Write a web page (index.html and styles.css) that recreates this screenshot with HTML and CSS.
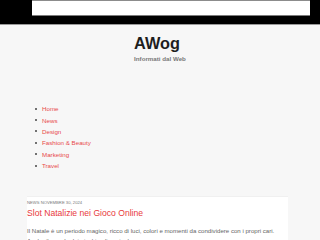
FILE: index.html
```html
<!DOCTYPE html>
<html lang="it">
<head>
<meta charset="utf-8">
<title>AWog</title>
<link rel="stylesheet" href="styles.css">
</head>
<body>
<header class="topbar">
  <div class="search"></div>
</header>
<div class="brand-wrap">
  <div class="brand">
    <h1 class="site-title">AWog</h1>
    <p class="site-desc">Informati dal Web</p>
  </div>
</div>
<nav class="menu">
  <ul>
    <li><a href="#">Home</a></li>
    <li><a href="#">News</a></li>
    <li><a href="#">Design</a></li>
    <li><a href="#">Fashion &amp; Beauty</a></li>
    <li><a href="#">Marketing</a></li>
    <li><a href="#">Travel</a></li>
  </ul>
</nav>
<article class="card">
  <div class="meta">NEWS NOVEMBRE 30, 2024</div>
  <h2 class="post-title">Slot Natalizie nei Gioco Online</h2>
  <p class="excerpt">Il Natale è un periodo magico, ricco di luci, colori e momenti da condividere con i propri cari. Anche il mondo dei giochi online si adegua</p>
</article>
</body>
</html>
```
FILE: styles.css
```css
html, body {
  margin: 0;
  padding: 0;
}
body {
  background: #f7f7f7;
  font-family: "Liberation Sans", Arial, sans-serif;
  overflow: hidden;
  height: 240px;
}
.topbar {
  background: #000;
  height: 24px;
  border-bottom: 1px solid #9a9a9a;
  padding-left: 32px;
  padding-right: 10px;
}
.search {
  background: #fff;
  height: 14px;
  border-top: 1px solid #8c8c8c;
  border-bottom: 1px solid #7a7a7a;
}
.brand-wrap {
  text-align: center;
  padding-top: 10px;
}
.brand {
  display: inline-block;
  text-align: left;
}
.site-title {
  margin: 0;
  font-size: 16.3px;
  line-height: 16px;
  font-weight: bold;
  color: #1e1e1e;
}
.site-desc {
  margin: 0;
  margin-top: 4px;
  font-size: 6.2px;
  line-height: 8px;
  font-weight: bold;
  color: #777;
}
.menu ul {
  margin: 38px 0 0 0;
  padding: 0 0 0 35px;
  list-style: none;
}
.menu li {
  display: flex;
  align-items: center;
  height: 11.4px;
  font-size: 6.2px;
}
.menu li::before {
  content: "";
  width: 2px;
  height: 2px;
  border-radius: 50%;
  background: #444;
  margin-right: 5px;
}
.menu a {
  color: #e8494b;
  text-decoration: none;
}
.card {
  background: #fff;
  margin: 26px 32px 0 27px;
  box-shadow: 0 -1px 0 #f0f0f0;
}
.meta {
  font-size: 4.2px;
  line-height: 9px;
  color: #777;
  padding-top: 1px;
}
.post-title {
  margin: 0;
  font-size: 8.6px;
  line-height: 13px;
  font-weight: normal;
  color: #e8393c;
}
.excerpt {
  margin: 6px 0 0 0;
  font-size: 6.1px;
  line-height: 9.5px;
  color: #666;
}
```
